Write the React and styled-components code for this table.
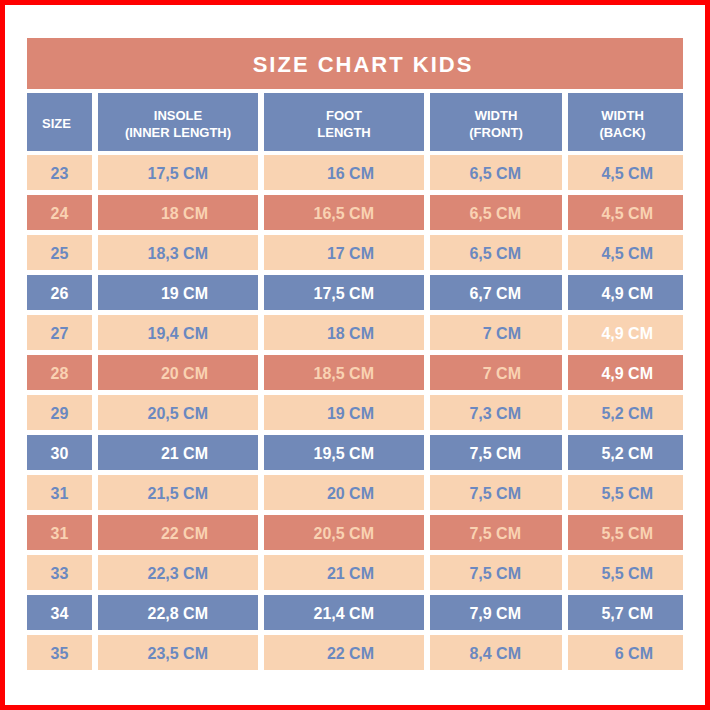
import React from 'react';
import styled, { createGlobalStyle } from 'styled-components';

const GlobalStyle = createGlobalStyle`
  html, body {
    margin: 0;
    padding: 0;
    background: #ffffff;
  }
  * {
    box-sizing: border-box;
  }
`;

const colors = {
  salmon: '#db8775',
  blue: '#7189b8',
  peach: '#f9d3b2',
  blueText: '#6a88c0',
  peachText: '#f9d2b2',
  white: '#ffffff',
};

const variants = {
  peach: { bg: colors.peach, fg: colors.blueText },
  salmon: { bg: colors.salmon, fg: colors.peachText },
  blue: { bg: colors.blue, fg: colors.white },
};

const Frame = styled.div`
  width: 710px;
  height: 710px;
  border: 5px solid #ff0000;
  background: #ffffff;
  padding: 33px 22px 0 22px;
  font-family: "Liberation Sans", Arial, sans-serif;
`;

const Chart = styled.div`
  display: flex;
  flex-direction: column;
  gap: 4px;
  width: 656px;
`;

const Title = styled.div`
  height: 51px;
  background: ${colors.salmon};
  color: #ffffff;
  display: flex;
  align-items: center;
  justify-content: center;
  font-size: 22px;
  font-weight: 700;
  letter-spacing: 2px;
  padding: 3px 0 0 16px;
`;

const Body = styled.div`
  display: flex;
  flex-direction: column;
  gap: 5px;
`;

const Row = styled.div`
  display: grid;
  grid-template-columns: 65px 160px 160px 132px 115px;
  column-gap: 6px;
  height: ${({ $height }) => $height}px;
`;

const HeadCell = styled.div`
  background: ${colors.blue};
  color: #ffffff;
  display: flex;
  align-items: center;
  justify-content: center;
  text-align: center;
  font-size: 13px;
  font-weight: 700;
  line-height: 17px;
  padding-top: 3px;
  padding-right: ${({ $shift }) => $shift || 0}px;
`;

const Cell = styled.div`
  background: ${({ $variant }) => variants[$variant].bg};
  color: ${({ $variant, $light }) => ($light ? colors.white : variants[$variant].fg)};
  display: flex;
  align-items: center;
  justify-content: ${({ $pad }) => ($pad ? 'flex-end' : 'center')};
  padding-right: ${({ $pad }) => $pad || 0}px;
  padding-top: 2px;
  font-size: 16px;
  font-weight: 700;
  white-space: nowrap;
`;

const headers = [
  ['SIZE'],
  ['INSOLE', '(INNER LENGTH)'],
  ['FOOT', 'LENGTH'],
  ['WIDTH', '(FRONT)'],
  ['WIDTH', '(BACK)'],
];

// header text sits a little left of centre in some columns
const headShift = [6, 0, 0, 0, 6];

// right padding per column, the source image has the values pushed right
const pads = [0, 50, 50, 41, 30];

const rows = [
  { v: 'peach', d: ['23', '17,5 CM', '16 CM', '6,5 CM', '4,5 CM'] },
  { v: 'salmon', d: ['24', '18 CM', '16,5 CM', '6,5 CM', '4,5 CM'] },
  { v: 'peach', d: ['25', '18,3 CM', '17 CM', '6,5 CM', '4,5 CM'] },
  { v: 'blue', d: ['26', '19 CM', '17,5 CM', '6,7 CM', '4,9 CM'] },
  { v: 'peach', d: ['27', '19,4 CM', '18 CM', '7 CM', '4,9 CM'], light: [4] },
  { v: 'salmon', d: ['28', '20 CM', '18,5 CM', '7 CM', '4,9 CM'], light: [4] },
  { v: 'peach', d: ['29', '20,5 CM', '19 CM', '7,3 CM', '5,2 CM'] },
  { v: 'blue', d: ['30', '21 CM', '19,5 CM', '7,5 CM', '5,2 CM'] },
  { v: 'peach', d: ['31', '21,5 CM', '20 CM', '7,5 CM', '5,5 CM'] },
  { v: 'salmon', d: ['31', '22 CM', '20,5 CM', '7,5 CM', '5,5 CM'] },
  { v: 'peach', d: ['33', '22,3 CM', '21 CM', '7,5 CM', '5,5 CM'] },
  { v: 'blue', d: ['34', '22,8 CM', '21,4 CM', '7,9 CM', '5,7 CM'] },
  { v: 'peach', d: ['35', '23,5 CM', '22 CM', '8,4 CM', '6 CM'] },
];

export default function App() {
  return (
    <>
      <GlobalStyle />
      <Frame>
        <Chart>
          <Title>SIZE CHART KIDS</Title>
          <Row $height={58}>
            {headers.map((lines, i) => (
              <HeadCell key={i} $shift={headShift[i]}>
                <div>
                  {lines.map((l) => (
                    <div key={l}>{l}</div>
                  ))}
                </div>
              </HeadCell>
            ))}
          </Row>
          <Body>
            {rows.map((row, r) => (
              <Row key={r} $height={35}>
                {row.d.map((val, c) => (
                  <Cell
                    key={c}
                    $variant={row.v}
                    $pad={pads[c]}
                    $light={row.light && row.light.includes(c)}
                  >
                    {val}
                  </Cell>
                ))}
              </Row>
            ))}
          </Body>
        </Chart>
      </Frame>
    </>
  );
}
